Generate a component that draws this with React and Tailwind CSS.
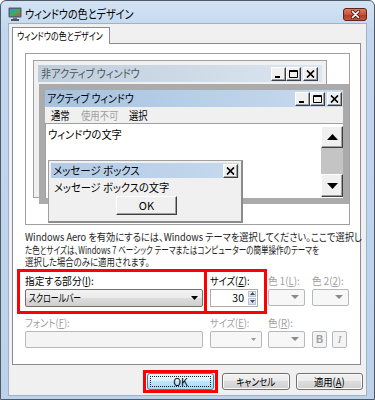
import React from "react";

const btnBg = "bg-[linear-gradient(#f2f2f2,#ebebeb_50%,#dddddd_50%,#cfcfcf)]";

function T({ s = "scale-x-[0.85]", o = "origin-left", className = "", children }) {
  return (
    <span className={`inline-block whitespace-nowrap ${o} ${s} ${className}`}>{children}</span>
  );
}

function Tri({ color = "#000", w = 7, h = 4, up = false }) {
  return (
    <svg width={w} height={h} viewBox={`0 0 ${w} ${h}`} className="block">
      <path d={up ? `M0 ${h}H${w}L${w / 2} 0Z` : `M0 0H${w}L${w / 2} ${h}Z`} fill={color} />
    </svg>
  );
}

function CapBtn({ type }) {
  return (
    <div className="w-[15px] h-[14px] bg-[#f0f0f0] border border-t-white border-l-white border-r-[#404040] border-b-[#404040] shadow-[inset_-1px_-1px_0_#a0a0a0] flex items-center justify-center">
      <svg width="9" height="8" viewBox="0 0 9 8" className="block">
        {type === "min" && <rect x="1" y="6" width="5" height="2" fill="#000" />}
        {type === "max" && <path d="M0.5 0.5h8v7h-8z M0.5 1.5h8" stroke="#000" fill="none" />}
        {type === "close" && <path d="M1 0.5l7 7M8 0.5l-7 7" stroke="#000" strokeWidth="1.7" />}
      </svg>
    </div>
  );
}

function ScrollBtn({ up, h }) {
  return (
    <div
      className={`w-full ${h} bg-[#f0f0f0] border border-t-white border-l-white border-r-[#404040] border-b-[#404040] shadow-[inset_-1px_-1px_0_#a0a0a0] flex items-center justify-center`}
    >
      <Tri up={up} w={11} h={6} />
    </div>
  );
}

function DisabledDrop({ w, small }) {
  return (
    <div
      className={`${w} h-[17px] rounded-[2px] border border-[#b5b9bc] bg-[#f7f7f7] flex items-center justify-end pr-[5px]`}
    >
      {small ? <Tri color="#9a9a9a" w={5} h={3} /> : <Tri color="#8a8a8a" w={8} h={4} />}
    </div>
  );
}

function WinButton({ children, w }) {
  return (
    <div
      className={`${w} h-[17px] rounded-[3px] border border-[#707070] ${btnBg} shadow-[inset_0_0_0_1px_#fcfcfc] flex items-center justify-center`}
    >
      {children}
    </div>
  );
}

export default function App() {
  return (
    <div className="w-[375px] h-[400px] overflow-hidden rounded-t-[6px] border border-[#4e5a68] bg-[linear-gradient(#d3e3f4,#c2d7ee_30px,#bcd2eb)] font-['Noto_Sans_CJK_JP','Noto_Sans',sans-serif] [font-feature-settings:'palt'] text-[10.5px] text-black">
      {/* title bar */}
      <div className="h-[22px] pt-[4px] pl-[7px] pr-[7px] flex items-center">
        <svg width="14" height="14" viewBox="0 0 14 14" className="block">
          <defs>
            <linearGradient id="scr" x1="0" y1="0" x2="1" y2="1">
              <stop offset="0" stopColor="#3a8ee6" />
              <stop offset="0.5" stopColor="#36b25a" />
              <stop offset="1" stopColor="#e04a3a" />
            </linearGradient>
          </defs>
          <rect x="0.5" y="0.5" width="13" height="10" rx="1" fill="#56616c" />
          <rect x="2" y="2" width="10" height="7" fill="url(#scr)" />
          <rect x="5" y="10.5" width="4" height="1.5" fill="#6e7882" />
          <rect x="3" y="12" width="8" height="2" fill="#4c5660" />
        </svg>
        <div className="ml-[3px] text-[12px]">
          <T s="scale-x-[0.84]">ウィンドウの色とデザイン</T>
        </div>
        <div className="flex-1" />
        <div className="w-[24px] h-[13px] rounded-[3px] border border-[#5e2418] bg-[#c54a30] bg-[linear-gradient(#dc7c64,#c9533a_50%,#b63a20_55%,#c9543a)] flex items-center justify-center">
          <svg width="11" height="9" viewBox="0 0 11 9" className="block">
            <path d="M2.5 1.5l6 6M8.5 1.5l-6 6" stroke="#4a1d14" strokeWidth="3.2" strokeLinecap="round" />
            <path d="M2.5 1.5l6 6M8.5 1.5l-6 6" stroke="#fff" strokeWidth="1.7" strokeLinecap="round" />
          </svg>
        </div>
      </div>

      {/* client */}
      <div className="ml-[7px] w-[359px] h-[373px] border border-[#9fb2c8] bg-[#f0f0f0] pt-[3px] pl-[3px]">
        {/* tab */}
        <div className="relative z-10 w-[98px] h-[17px] border border-b-0 border-[#898c95] bg-white pl-[4px] flex items-center overflow-visible">
          <T s="scale-x-[0.76]">ウィンドウの色とデザイン</T>
        </div>
        {/* panel */}
        <div className="-mt-px w-[349px] h-[322px] border border-[#898c95] bg-white pl-[4px] pt-[9px]">
          {/* preview */}
          <div className="ml-[8px] w-[325px] h-[172px] border border-[#a0a0a0] bg-white relative text-[11px]">
            {/* inactive window */}
            <div className="absolute left-[7px] top-[6px] w-[294px] h-[138px] border border-[#a0a0a0] bg-[#f0f0f0] p-[4px]">
              <div className="h-[17px] bg-[linear-gradient(90deg,#bfcddb,#dbe6f1)] flex items-center pl-[3px] pr-[4px]">
                <T s="scale-x-[0.92]" className="text-[#4a555c]">非アクティブ ウィンドウ</T>
                <div className="flex-1" />
                <CapBtn type="min" />
                <CapBtn type="max" />
                <div className="w-[2px]" />
                <CapBtn type="close" />
              </div>
            </div>
            {/* active window */}
            <div className="absolute left-[13px] top-[30px] w-[310px] h-[120px] border-[6px] border-[#ababab] bg-[#f0f0f0] flex flex-col">
              <div className="h-[17px] bg-[linear-gradient(90deg,#a6c2e0,#c8dbef)] flex items-center pl-[2px] pr-[1px]">
                <T s="scale-x-[0.9]">アクティブ ウィンドウ</T>
                <div className="flex-1" />
                <CapBtn type="min" />
                <CapBtn type="max" />
                <div className="w-[2px]" />
                <CapBtn type="close" />
              </div>
              <div className="h-[16px] flex items-center pl-[6px]">
                <div className="w-[30px]">
                  <T s="scale-x-[0.85]">通常</T>
                </div>
                <div className="w-[48px] text-[#a0a0a0]">
                  <T s="scale-x-[0.85]">使用不可</T>
                </div>
                <div>
                  <T s="scale-x-[0.85]">選択</T>
                </div>
              </div>
              <div className="flex-1 flex bg-white border-t border-l border-[#a0a0a0]">
                <div className="flex-1 pl-[2px] pt-[2px]">
                  <T s="scale-x-[0.93]">ウィンドウの文字</T>
                </div>
                <div className="w-[22px] flex flex-col pt-[2px]">
                  <ScrollBtn up h="h-[22px]" />
                  <div className="h-[26px] bg-[#c4c4c4]" />
                  <ScrollBtn h="h-[23px]" />
                </div>
              </div>
            </div>
            {/* message box */}
            <div className="absolute left-[22px] top-[106px] w-[195px] h-[63px] border border-[#a0a0a0] border-r-2 border-b-2 border-r-[#8c8c8c] border-b-[#8c8c8c] bg-[#f0f0f0] p-[2px] flex flex-col">
              <div className="h-[15px] bg-[linear-gradient(90deg,#b2cae5,#c5d9ee)] flex items-center pl-[2px] pr-[1px]">
                <T s="scale-x-[0.95]">メッセージ ボックス</T>
                <div className="flex-1" />
                <CapBtn type="close" />
              </div>
              <div className="h-[18px] flex items-center pl-[3px]">
                <T s="scale-x-[0.93]">メッセージ ボックスの文字</T>
              </div>
              <div className="ml-[65px] w-[61px] h-[19px] bg-[#f0f0f0] border border-t-white border-l-white border-r-[#404040] border-b-[#404040] shadow-[inset_-1px_-1px_0_#a0a0a0] flex items-center justify-center">
                OK
              </div>
            </div>
          </div>

          {/* description */}
          <div className="ml-[8px] mt-[6px] leading-[12.5px] text-[#1e1e1e]">
            <div className="h-[12.5px]">
              <T s="scale-x-[0.88]">Windows Aero を有効にするには、Windows テーマを選択してください。ここで選択し</T>
            </div>
            <div className="h-[12.5px]">
              <T s="scale-x-[0.72]">た色とサイズは、Windows 7 ベーシック テーマまたはコンピューターの簡単操作のテーマを</T>
            </div>
            <div className="h-[12.5px]">
              <T s="scale-x-[0.8]">選択した場合のみに適用されます。</T>
            </div>
          </div>

          {/* row 1 */}
          <div className="flex items-start">
            <div className="w-[190px] h-[45px] border-[3px] border-[#ff0000] pl-[5px] pt-[1px]">
              <div className="h-[16px] leading-[16px]">
                <T s="scale-x-[0.93]">
                  指定する部分(<span className="underline">I</span>):
                </T>
              </div>
              <div className={`w-[178px] h-[18px] rounded-[2px] border border-[#707070] ${btnBg} flex items-center pl-[3px] pr-[4px]`}>
                <T s="scale-x-[0.75]">スクロールバー</T>
                <div className="flex-1" />
                <Tri w={7} h={4} />
              </div>
            </div>
            <div className="w-[60px] h-[45px] border-[3px] border-l-0 border-[#ff0000] pl-[3px] pt-[1px]">
              <div className="h-[16px] leading-[16px]">
                <T s="scale-x-[0.88]">
                  サイズ(<span className="underline">Z</span>):
                </T>
              </div>
              <div className="w-[48px] h-[18px] border border-[#abadb3] bg-white flex items-center">
                <div className="flex-1 text-right pr-[4px]">30</div>
                <div className="w-[9px] h-full flex flex-col gap-px py-px pr-px">
                  <div className="flex-1 bg-[linear-gradient(#eef3f8,#d3dfea)] border border-[#b4c3d3] flex items-center justify-center">
                    <Tri up w={5} h={3} color="#3b4a5a" />
                  </div>
                  <div className="flex-1 bg-[linear-gradient(#eef3f8,#d3dfea)] border border-[#b4c3d3] flex items-center justify-center">
                    <Tri w={5} h={3} color="#3b4a5a" />
                  </div>
                </div>
              </div>
            </div>
            <div className="ml-[1px] pt-[4px] text-[#a0a0a0]">
              <div className="h-[16px] leading-[16px]">
                <T s="scale-x-[0.92]">
                  色 1(<span className="underline">L</span>):
                </T>
              </div>
              <DisabledDrop w="w-[37px]" />
            </div>
            <div className="ml-[7px] pt-[4px] text-[#a0a0a0]">
              <div className="h-[16px] leading-[16px]">
                <T s="scale-x-[0.92]">
                  色 2(<span className="underline">2</span>):
                </T>
              </div>
              <DisabledDrop w="w-[37px]" />
            </div>
          </div>

          {/* row 2 */}
          <div className="flex items-start pl-[8px] pt-[1px] text-[#a0a0a0]">
            <div className="w-[185px]">
              <div className="h-[16px] leading-[16px]">
                <T s="scale-x-[0.89]">
                  フォント(<span className="underline">F</span>):
                </T>
              </div>
              <div className="w-[178px] h-[17px] rounded-[2px] border border-[#b5b9bc] bg-[#f4f4f4]" />
            </div>
            <div className="w-[58px]">
              <div className="h-[16px] leading-[16px]">
                <T s="scale-x-[0.88]">
                  サイズ(<span className="underline">E</span>):
                </T>
              </div>
              <DisabledDrop w="w-[52px]" small />
            </div>
            <div className="w-[44px]">
              <div className="h-[16px] leading-[16px]">
                <T s="scale-x-[0.92]">
                  色(<span className="underline">R</span>):
                </T>
              </div>
              <DisabledDrop w="w-[37px]" />
            </div>
            <div className="pt-[16px] flex gap-[5px]">
              <div className="w-[15px] h-[17px] rounded-[2px] border border-[#b5b9bc] bg-[#f4f4f4] flex items-center justify-center font-['Liberation_Sans',sans-serif] font-bold text-[10px]">
                B
              </div>
              <div className="w-[15px] h-[17px] rounded-[2px] border border-[#b5b9bc] bg-[#f4f4f4] flex items-center justify-center font-['Liberation_Serif',serif] italic text-[11px]">
                I
              </div>
            </div>
          </div>
        </div>

        {/* buttons */}
        <div className="mt-[5px] flex items-center justify-end pr-[3px]">
          <div className="w-[75px] h-[23px] border-[3px] border-[#ff0000] flex items-center justify-center">
            <div className="w-[67px] h-[17px] rounded-[3px] border border-[#3c7fb1] bg-[linear-gradient(#eaf6fd,#d9f0fc_50%,#bee6fd_50%,#a7d9f5)] p-[2px]">
              <div className="w-full h-full border border-dotted border-[#222] flex items-center justify-center">
                OK
              </div>
            </div>
          </div>
          <div className="w-[4px]" />
          <WinButton w="w-[68px]">
            <T s="scale-x-[0.82]" o="origin-center">キャンセル</T>
          </WinButton>
          <div className="w-[6px]" />
          <WinButton w="w-[67px]">
            <T s="scale-x-[0.89]" o="origin-center">
              適用(<span className="underline">A</span>)
            </T>
          </WinButton>
        </div>
      </div>
    </div>
  );
}
